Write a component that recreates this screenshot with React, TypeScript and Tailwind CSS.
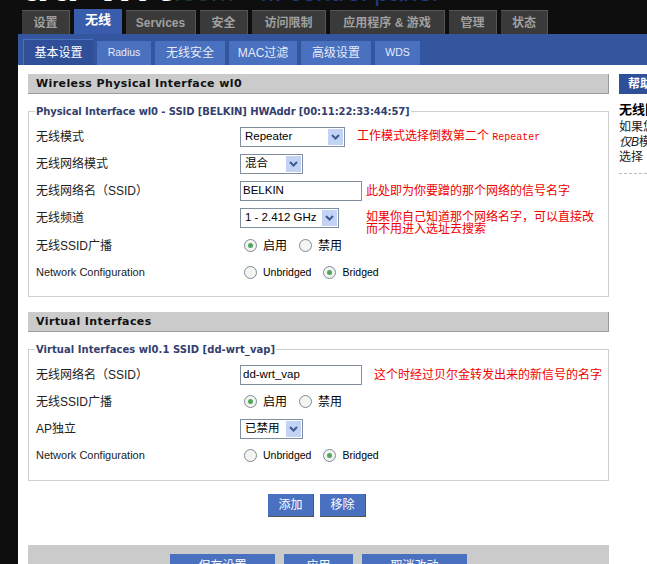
const sans = "font-['Liberation_Sans','Noto_Sans_CJK_SC',sans-serif]";

const mainTabs = [
  { label: "设置", w: "w-[48px]" },
  { label: "无线", w: "w-[48px]" },
  { label: "Services", w: "w-[70px]" },
  { label: "安全", w: "w-[48px]" },
  { label: "访问限制", w: "w-[74px]" },
  { label: "应用程序 & 游戏", w: "w-[115px]" },
  { label: "管理", w: "w-[48px]" },
  { label: "状态", w: "w-[47px]" },
];
const subTabs = [
  { label: "基本设置", w: "w-[70px]" },
  { label: "Radius", w: "w-[54px]" },
  { label: "无线安全", w: "w-[70px]" },
  { label: "MAC过滤", w: "w-[68px]" },
  { label: "高级设置", w: "w-[70px]" },
  { label: "WDS", w: "w-[45px]" },
];

function Radio({ on, label }: { on?: boolean; label: string }) {
  return (
    <span className="flex items-center gap-[6px]">
      <span className="flex h-[13px] w-[13px] items-center justify-center rounded-full border border-[#7c8a98] bg-[#f4f4f0]">
        {on ? <span className="h-[5px] w-[5px] rounded-full bg-[#4fa65c]" /> : null}
      </span>
      <span>{label}</span>
    </span>
  );
}

function Select({ label, width }: { label: string; width: string }) {
  return (
    <div className={`flex h-[20px] items-center justify-between border border-[#7f8f9f] bg-white pl-[4px] pr-[1px] text-[11.5px] ${width}`}>
      <span>{label}</span>
      <span className="flex h-[16px] w-[15px] items-center justify-center bg-[#c3d3f5]">
        <svg width="9" height="6" viewBox="0 0 9 6">
          <path d="M1 1l3.5 3.5L8 1" fill="none" stroke="#3d5a90" strokeWidth="2" />
        </svg>
      </span>
    </div>
  );
}

function Row({ label, children, small, className = "" }: { label: string; children: React.ReactNode; small?: boolean; className?: string }) {
  return (
    <div className={`flex h-[27px] items-center ${className}`}>
      <div className={`w-[204px] shrink-0 text-[#222] ${small ? "text-[11px]" : "text-[12px]"}`}>{label}</div>
      {children}
    </div>
  );
}

function Note({ children, ml }: { children: React.ReactNode; ml: string }) {
  return <span className={`text-[12px] leading-[12px] text-[#f00000] ${ml}`}>{children}</span>;
}

function Input({ value }: { value: string }) {
  return (
    <div className="flex h-[20px] w-[122px] items-center border border-[#7f8f9f] bg-white pl-[2px] text-[11.5px]">{value}</div>
  );
}

function SectionTitle({ children }: { children: React.ReactNode }) {
  return (
    <div className="flex h-[20px] items-center border-b border-r border-[#9a9a9a] bg-[#cbcbcb] pl-[8px] pt-[2px] font-['DejaVu_Sans',sans-serif] text-[11px] font-bold tracking-[0.4px] text-[#111]">
      {children}
    </div>
  );
}

function Fieldset({ legend, legendClass, children, className }: { legend: string; legendClass: string; children: React.ReactNode; className: string }) {
  return (
    <fieldset className={`border border-[#cfcfcf] pl-[7px] pt-[4px] ${className}`}>
      <legend className={`-ml-[1px] px-[1px] font-['DejaVu_Sans',sans-serif] text-[10px] font-bold text-[#33406e] ${legendClass}`}>{legend}</legend>
      {children}
    </fieldset>
  );
}

function EnableRadios() {
  return (
    <div className="flex gap-[12px] pl-[4px] text-[12px]">
      <Radio on label="启用" />
      <Radio label="禁用" />
    </div>
  );
}

function BridgeRadios() {
  return (
    <div className="flex gap-[12px] pl-[4px] text-[10.5px]">
      <Radio label="Unbridged" />
      <Radio on label="Bridged" />
    </div>
  );
}

export default function App() {
  return (
    <div className={`h-[564px] w-[647px] overflow-hidden bg-[#0e0e0e] text-[11px] ${sans}`}>
      <div className="relative h-[9px] overflow-hidden">
        <div className="absolute bottom-[3px] left-[21px] font-['Liberation_Sans',sans-serif] text-[46px] font-bold leading-[28px] tracking-[2px] whitespace-nowrap text-white">dd-wrt<span className="text-[28px] font-normal tracking-normal text-[#1f3a40]">.com</span></div>
        <div className="absolute bottom-[7px] left-[260px] font-['Liberation_Sans',sans-serif] text-[26px] leading-[20px] whitespace-nowrap text-[#1f3a80]">... control panel</div>
      </div>
      <div className="ml-[22px] flex h-[25px] items-end gap-[4px]">
        {mainTabs.map((t) =>
          t.label === "无线" ? (
            <div key={t.label} className={`flex h-[25px] items-center justify-center bg-[#3a5cac] pb-[3px] text-[13px] font-bold text-white ${t.w}`}>{t.label}</div>
          ) : (
            <div key={t.label} className={`flex h-[24px] items-center justify-center border-t border-r border-[#555] bg-[#3a3a3a] text-[12px] font-bold text-[#a0a0a0] ${t.w}`}>{t.label}</div>
          ),
        )}
      </div>
      <div className="ml-[18px] flex h-[31px] items-end gap-[4px] bg-[#34569f] pl-[5px]">
        {subTabs.map((t, i) =>
          i === 0 ? (
            <div key={t.label} className={`flex h-[26px] items-center justify-center border-t border-l border-[#4a70c0] bg-[#2f4f98] text-[12px] text-white ${t.w}`}>{t.label}</div>
          ) : (
            <div key={t.label} className={`flex h-[24px] items-center justify-center bg-[#4a70c0] text-[#e6ecf8] ${t.label === "Radius" || t.label === "WDS" ? "text-[10.5px]" : "text-[12px]"} ${t.w}`}>{t.label}</div>
          ),
        )}
      </div>
      <div className="ml-[18px] flex h-[499px] bg-white pt-[9px]">
        <div className="ml-[10px] w-[581px] shrink-0">
          <SectionTitle>Wireless Physical Interface wl0</SectionTitle>
          <Fieldset legend="Physical Interface wl0 - SSID [BELKIN] HWAddr [00:11:22:33:44:57]" legendClass="tracking-[-0.1px]" className="mt-[10px] h-[193px]">
            <Row label="无线模式">
              <Select label="Repeater" width="w-[105px]" />
              <Note ml="ml-[12px]">工作模式选择倒数第二个 <span className="font-['Liberation_Mono',monospace] text-[10px]">Repeater</span></Note>
            </Row>
            <Row label="无线网络模式">
              <Select label="混合" width="w-[63px]" />
            </Row>
            <Row label="无线网络名（SSID）">
              <Input value="BELKIN" />
              <Note ml="ml-[4px]">此处即为你要蹭的那个网络的信号名字</Note>
            </Row>
            <Row label="无线频道">
              <Select label="1 - 2.412 GHz" width="w-[99px]" />
              <div className="ml-[27px] mt-[10px] w-[230px] text-[12px] leading-[12px] text-[#f00000]">如果你自己知道那个网络名字，可以直接改而不用进入选址去搜索</div>
            </Row>
            <Row label="无线SSID广播" className="mt-[1px]">
              <EnableRadios />
            </Row>
            <Row label="Network Configuration" small>
              <BridgeRadios />
            </Row>
          </Fieldset>
          <div className="mt-[15px]">
            <SectionTitle>Virtual Interfaces</SectionTitle>
          </div>
          <Fieldset legend="Virtual Interfaces wl0.1 SSID [dd-wrt_vap]" legendClass="tracking-[0.04px]" className="mt-[10px] h-[139px]">
            <Row label="无线网络名（SSID）">
              <Input value="dd-wrt_vap" />
              <Note ml="ml-[12px]">这个时经过贝尔金转发出来的新信号的名字</Note>
            </Row>
            <Row label="无线SSID广播">
              <EnableRadios />
            </Row>
            <Row label="AP独立">
              <Select label="已禁用" width="w-[63px]" />
            </Row>
            <Row label="Network Configuration" small>
              <BridgeRadios />
            </Row>
          </Fieldset>
          <div className="mt-[13px] flex justify-center gap-[6px] pr-[3px]">
            <button className="h-[23px] w-[46px] border-b border-r border-[#555] bg-[#4a70c0] text-[12px] text-white">添加</button>
            <button className="h-[23px] w-[46px] border-b border-r border-[#555] bg-[#4a70c0] text-[12px] text-white">移除</button>
          </div>
          <div className="mt-[28px] flex h-[40px] justify-center gap-[9px] bg-[#cbcbcb] pt-[9px]">
            <button className="h-[24px] w-[105px] bg-[#4a70c0] text-[12px] text-white">保存设置</button>
            <button className="h-[24px] w-[69px] bg-[#4a70c0] text-[12px] text-white">应用</button>
            <button className="h-[24px] w-[105px] bg-[#4a70c0] text-[12px] text-white">取消改动</button>
          </div>
        </div>
        <div className="ml-[10px] flex-1 overflow-hidden">
          <div className="flex h-[20px] items-center bg-[#2f4f98] pl-[9px] text-[12px] font-bold whitespace-nowrap text-white">帮助</div>
          <div className="mt-[6px] text-[13px] font-bold whitespace-nowrap text-black">无线网络</div>
          <div className="text-[12px] leading-[15px] text-[#222]">
            <div className="whitespace-nowrap">如果您的</div>
            <div className="whitespace-nowrap"><i>仅B</i>模式</div>
            <div className="whitespace-nowrap">选择</div>
          </div>
          <div className="mt-[8px] border-t border-dashed border-[#bbb]" />
        </div>
      </div>
    </div>
  );
}
